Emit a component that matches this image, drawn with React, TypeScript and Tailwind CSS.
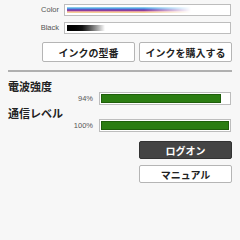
import React from 'react';

const jp = { fontFamily: '"Noto Sans CJK JP", "Noto Sans", sans-serif' };
const latin = { fontFamily: '"Liberation Sans", Arial, sans-serif' };

const InkRow: React.FC<{ label: string; children: React.ReactNode }> = ({ label, children }) => (
  <div className="flex items-center h-[12px]">
    <div className="w-[51px] text-right text-[7.5px] text-[#555]" style={latin}>{label}</div>
    <div className="ml-[5px] w-[167px] h-[12px] bg-white border border-[#bdbdbd] p-[2px]">{children}</div>
  </div>
);

const SignalRow: React.FC<{ title: string; pct: number; className?: string }> = ({ title, pct, className }) => (
  <div className={className}>
    <div className="text-[11px] font-bold leading-[12px] text-[#222]" style={jp}>{title}</div>
    <div className="flex items-center">
      <div className="w-[85px] text-right text-[7.5px] text-[#555]" style={latin}>{pct}%</div>
      <div className="ml-[6px] w-[132px] h-[13px] bg-white border border-[#bdbdbd] p-[1px]">
        <div className="h-full bg-[#2b7d12] border border-[#1f5e0b]" style={{ width: `${pct}%` }} />
      </div>
    </div>
  </div>
);

export default function App() {
  return (
    <div className="w-[240px] h-[240px] bg-[#f7f7f7] px-[8px] pt-[4px] overflow-hidden">
      <div className="flex flex-col gap-[6px]">
        <InkRow label="Color">
          <div className="h-full w-[124px] bg-[linear-gradient(to_bottom,#a6e2ef_0%,#56a6e6_22%,#5a58c8_40%,#8a3c9e_58%,#e9a3a6_76%,#f8e690_100%)] [mask-image:linear-gradient(to_right,black_62%,transparent)]" />
        </InkRow>
        <InkRow label="Black">
          <div className="h-full w-[38px] bg-gradient-to-r from-black via-[#111] via-40% to-white" />
        </InkRow>
      </div>

      <div className="flex justify-end gap-[4px] mt-[8px]">
        <button className="w-[93px] h-[20px] bg-white border border-[#b5b5b5] rounded-[2px] text-[10px] font-bold text-[#222] flex items-center justify-center" style={jp}>
          インクの型番
        </button>
        <button className="w-[93px] h-[20px] bg-white border border-[#b5b5b5] rounded-[2px] text-[10px] font-bold text-[#222] flex items-center justify-center" style={jp}>
          インクを購入する
        </button>
      </div>

      <div className="mt-[8px] h-[2px] bg-[#b0b0b0]" />

      <SignalRow title="電波強度" pct={94} className="mt-[8px]" />
      <SignalRow title="通信レベル" pct={100} className="mt-[2px]" />

      <div className="flex flex-col items-end gap-[6px] mt-[9px]">
        <button className="w-[93px] h-[18px] bg-[#444] border border-[#333] rounded-[2px] text-[10px] font-bold text-white flex items-center justify-center" style={jp}>
          ログオン
        </button>
        <button className="w-[93px] h-[18px] bg-white border border-[#b5b5b5] rounded-[2px] text-[10px] font-bold text-[#222] flex items-center justify-center" style={jp}>
          マニュアル
        </button>
      </div>
    </div>
  );
}
